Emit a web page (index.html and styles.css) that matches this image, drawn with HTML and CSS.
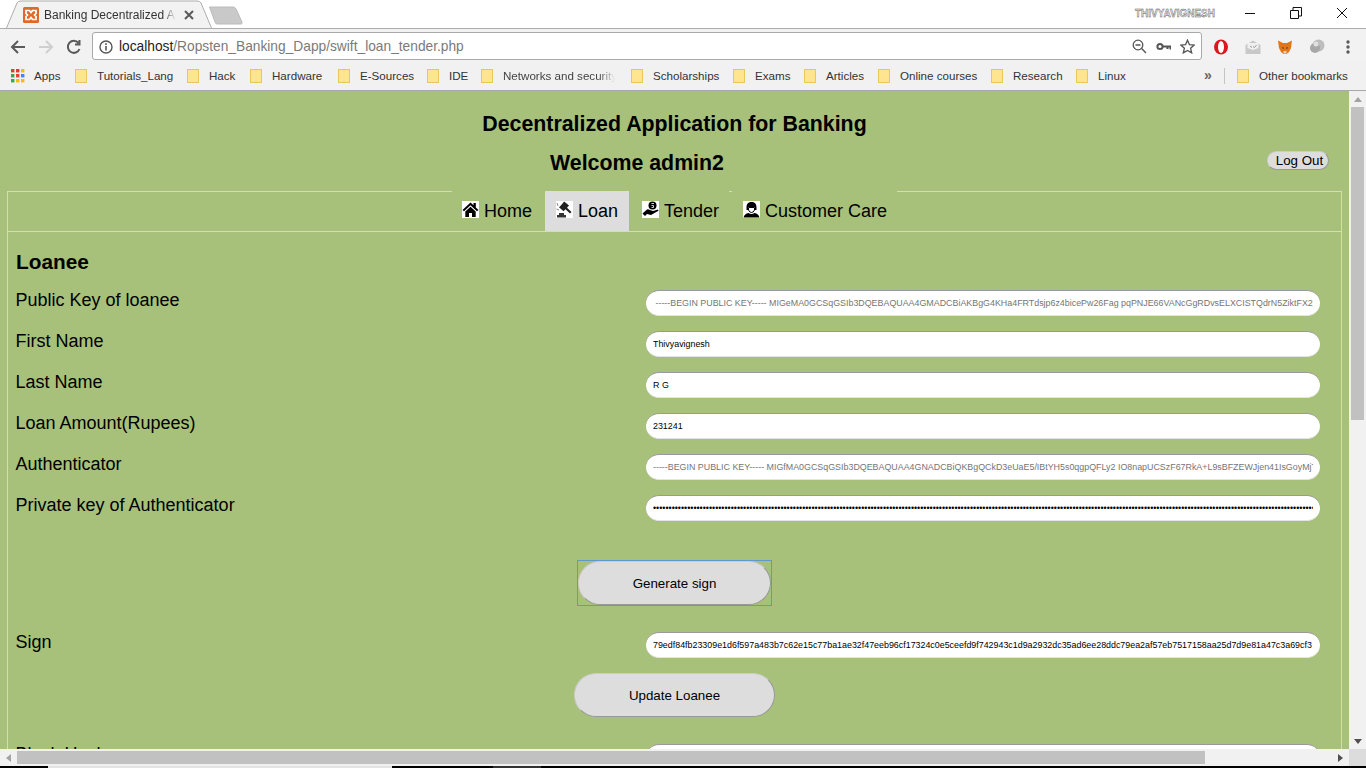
FILE: index.html

```html
<!DOCTYPE html>
<html lang="en">
<head>
    <meta charset="UTF-8">
    <meta name="viewport" content="width=device-width, initial-scale=1.0">
    <title>Banking Decentralized App</title>
    <link rel="stylesheet" href="styles.css">
</head>
<body>

    <!-- browser window: tabs -->
    <div class="tabstrip">
        <svg class="tab-shape" width="206" height="29" viewBox="0 0 206 29">
            <path d="M0.5 28 L11 3 Q12 1 15 1 L191 1 Q194 1 195 3 L205.5 28" fill="#f2f2f2" stroke="#adadad"/>
        </svg>
        <div class="tab">
            <svg class="favicon" width="16" height="16" viewBox="0 0 16 16">
                <rect width="16" height="16" rx="1.5" fill="#e2672a"/>
                <path d="M3 3.5 H6.5 L8 5.5 L9.5 3.5 H13 V6.5 L11.5 8 L13 9.5 V12.5 H9.5 L8 10.5 L6.5 12.5 H3 V9.5 L4.5 8 L3 6.5 Z" fill="none" stroke="#fff" stroke-width="1.7"/>
            </svg>
            <span class="tab-title">Banking Decentralized Ap</span>
            <svg class="tab-close" width="10" height="10" viewBox="0 0 10 10">
                <path d="M1 1 L9 9 M9 1 L1 9" stroke="#5a5a5a" stroke-width="2"/>
            </svg>
        </div>
        <svg class="newtab" width="36" height="19" viewBox="0 0 36 19">
            <path d="M1.5 1 H25 Q27 1 28 3 L34 16 Q34.5 18 33 18 H9 Q7.5 18 7 16 Z" fill="#c9c9c9" stroke="#bbb"/>
        </svg>
        <span class="username">THIVYAVIGNESH</span>
        <div class="window-buttons">
            <svg width="12" height="12" viewBox="0 0 12 12"><path d="M1 6.5 H11" stroke="#111"/></svg>
            <svg width="12" height="12" viewBox="0 0 12 12"><path d="M0.5 3.5 H8.5 V11.5 H0.5 Z M3 3 V0.5 H11.5 V9 H9" fill="none" stroke="#111"/></svg>
            <svg width="12" height="12" viewBox="0 0 12 12"><path d="M1 1 L11 11 M11 1 L1 11" stroke="#111"/></svg>
        </div>
    </div>

    <!-- browser window: toolbar -->
    <div class="toolbar">
        <svg class="nav-icon" width="16" height="16" viewBox="0 0 16 16"><path d="M15 8 H2.5 M8 2 L2 8 L8 14" fill="none" stroke="#5a5a5a" stroke-width="2"/></svg>
        <svg class="nav-icon" width="16" height="16" viewBox="0 0 16 16"><path d="M1 8 H13.5 M8 2 L14 8 L8 14" fill="none" stroke="#cfcfcf" stroke-width="2"/></svg>
        <svg class="nav-icon" width="16" height="16" viewBox="0 0 16 16"><path d="M13.5 10 A6 6 0 1 1 12.5 4 M13.5 1 V5.5 H9" fill="none" stroke="#5a5a5a" stroke-width="2"/></svg>
        <div class="omnibox">
            <svg class="omni-info" width="14" height="14" viewBox="0 0 14 14"><circle cx="7" cy="7" r="6" fill="none" stroke="#555" stroke-width="1.4"/><path d="M7 6 V10.5 M7 3.2 V5" stroke="#555" stroke-width="1.6"/></svg>
            <span class="url"><span class="url-host">localhost</span>/Ropsten_Banking_Dapp/swift_loan_tender.php</span>
            <svg class="omni-icon" width="15" height="15" viewBox="0 0 15 15"><circle cx="6" cy="6" r="4.8" fill="none" stroke="#555" stroke-width="1.3"/><path d="M3.5 6 H8.5 M9.6 9.6 L14 14" stroke="#555" stroke-width="1.4"/></svg>
            <svg class="omni-icon" width="15" height="15" viewBox="0 0 15 15"><circle cx="4" cy="7.5" r="2.6" fill="none" stroke="#555" stroke-width="2"/><path d="M6.5 7.5 H14.5 V10.5 M11.5 7.5 V10" fill="none" stroke="#555" stroke-width="2"/></svg>
            <svg class="omni-icon" width="15" height="15" viewBox="0 0 15 15"><path d="M7.5 1.2 L9.4 5.6 L14.2 6 L10.6 9.2 L11.7 13.9 L7.5 11.4 L3.3 13.9 L4.4 9.2 L0.8 6 L5.6 5.6 Z" fill="none" stroke="#555" stroke-width="1.3"/></svg>
        </div>
        <div class="extensions">
            <svg width="16" height="16" viewBox="0 0 16 16"><ellipse cx="8" cy="8" rx="7" ry="7.5" fill="#e0161f"/><ellipse cx="8" cy="8" rx="3" ry="6" fill="#fff"/></svg>
            <svg width="16" height="16" viewBox="0 0 16 16"><path d="M0.5 6 L8 1.5 L15.5 6 V15 H0.5 Z" fill="#c8c8c8"/><path d="M2.5 4 H13.5 V9 L8 11 L2.5 9 Z" fill="#efefef"/><path d="M5 7 L7 8.5 M8 7.5 L9.5 8.5 L11.5 6" stroke="#999" fill="none"/></svg>
            <svg width="16" height="16" viewBox="0 0 16 16"><path d="M1 1.5 L6 4 H10 L15 1.5 L14 9 L12 13 L9.5 15 H6.5 L4 13 L2 9 Z" fill="#e2761b"/><path d="M5 8 L7 9 L6 10 Z M11 8 L9 9 L10 10 Z" fill="#2a2a2a"/><path d="M6.5 12 H9.5 V14.5 H6.5 Z" fill="#e8d5c0"/></svg>
            <svg width="16" height="16" viewBox="0 0 16 16"><circle cx="9.5" cy="6.5" r="6" fill="#bdbdbd"/><circle cx="6" cy="9" r="5" fill="#a8a8a8"/><circle cx="7" cy="5" r="2.5" fill="#e0e0e0"/></svg>
            <svg class="dots" width="4" height="14" viewBox="0 0 4 14"><circle cx="2" cy="2" r="1.7" fill="#5a5a5a"/><circle cx="2" cy="7" r="1.7" fill="#5a5a5a"/><circle cx="2" cy="12" r="1.7" fill="#5a5a5a"/></svg>
        </div>
    </div>

    <!-- browser window: bookmarks -->
    <div class="bookmarks">
        <span class="bookmark apps-link">
            <svg width="14" height="14" viewBox="0 0 14 14">
                <rect x="0" y="0" width="3.4" height="3.4" fill="#e53935"/><rect x="5" y="0" width="3.4" height="3.4" fill="#e53935"/><rect x="10" y="0" width="3.4" height="3.4" fill="#fbbc05"/>
                <rect x="0" y="5" width="3.4" height="3.4" fill="#34a853"/><rect x="5" y="5" width="3.4" height="3.4" fill="#ea4335"/><rect x="10" y="5" width="3.4" height="3.4" fill="#4285f4"/>
                <rect x="0" y="10" width="3.4" height="3.4" fill="#34a853"/><rect x="5" y="10" width="3.4" height="3.4" fill="#fbbc05"/><rect x="10" y="10" width="3.4" height="3.4" fill="#fbbc05"/>
            </svg>
            Apps
        </span>
        <span class="bookmark w-tutorials"><i class="folder"></i>Tutorials_Lang</span>
        <span class="bookmark w-hack"><i class="folder"></i>Hack</span>
        <span class="bookmark w-hardware"><i class="folder"></i>Hardware</span>
        <span class="bookmark w-esources"><i class="folder"></i>E-Sources</span>
        <span class="bookmark w-ide"><i class="folder"></i>IDE</span>
        <span class="bookmark w-networks"><i class="folder"></i><span class="fade">Networks and security</span></span>
        <span class="bookmark w-scholar"><i class="folder"></i>Scholarships</span>
        <span class="bookmark w-exams"><i class="folder"></i>Exams</span>
        <span class="bookmark w-articles"><i class="folder"></i>Articles</span>
        <span class="bookmark w-online"><i class="folder"></i>Online courses</span>
        <span class="bookmark w-research"><i class="folder"></i>Research</span>
        <span class="bookmark w-linux"><i class="folder"></i>Linux</span>
        <span class="more">&raquo;</span>
        <span class="bm-sep"></span>
        <span class="bookmark other"><i class="folder"></i>Other bookmarks</span>
    </div>

    <!-- the page itself -->
    <div class="viewport">
        <div class="page">
            <h2 class="title">Decentralized Application for Banking</h2>
            <div class="welcome-row">
                <h2 class="welcome">Welcome admin2</h2>
                <button class="logout" type="button">Log Out</button>
            </div>

            <div class="panel">
                <ul class="menu">
                    <li class="menu-item item-home">
                        <svg class="menu-icon" width="17" height="17" viewBox="0 0 17 17">
                            <rect width="17" height="17" fill="#fff"/>
                            <path d="M8.5 1.5 L0.5 9 L2 10.2 L8.5 4.3 L15 10.2 L16.5 9 L13.8 6.5 V2 H11.5 V4.3 Z M3.3 10.5 L8.5 5.8 L13.7 10.5 V16 H10 V12 H7 V16 H3.3 Z" fill="#000"/>
                        </svg>
                        Home
                    </li>
                    <li class="menu-item active">
                        <svg class="menu-icon" width="17" height="17" viewBox="0 0 17 17">
                            <rect width="17" height="17" fill="#fff"/>
                            <path d="M8.2 0.5 L13 4.5 L11 6.8 L15.5 11 L14 12.5 L9.5 8.2 L7.5 10.3 L3 6.3 L4.6 4.7 L6.5 2.5 Z" fill="#222"/>
                            <path d="M1 2 L2 5 M0.5 8 L3 9" stroke="#888"/>
                            <path d="M1 14 H10 V16.5 H1 Z M3 12 H8 V14 H3 Z" fill="#333"/>
                        </svg>
                        Loan
                    </li>
                    <li class="menu-item item-tender">
                        <svg class="menu-icon" width="17" height="17" viewBox="0 0 17 17">
                            <rect width="17" height="17" fill="#fff"/>
                            <circle cx="10.5" cy="4.5" r="4" fill="#000"/>
                            <path d="M9.5 2.5 H12 M9.5 4.5 H11.5 V6.5 H9.5" stroke="#fff" fill="none" stroke-width="0.8"/>
                            <path d="M0.5 12.5 L5 8.5 Q6 8 8 9 L11 10 L16 8.5 L16.5 9.8 L9 14 L5 13 L3 15 Z" fill="#000"/>
                        </svg>
                        Tender
                    </li>
                    <li class="menu-item item-care">
                        <svg class="menu-icon" width="17" height="17" viewBox="0 0 17 17">
                            <rect width="17" height="17" fill="#fff"/>
                            <path d="M8.5 1 C4.5 1 3.5 3.5 3.5 6.5 V9 H5 V6 H12 V9 H13.5 V6.5 C13.5 3.5 12.5 1 8.5 1 Z" fill="#000"/>
                            <path d="M5.5 6.5 H11.5 V9 Q10.5 11.5 8.5 11.5 Q6.5 11.5 5.5 9 Z" fill="none" stroke="#000"/>
                            <path d="M0.5 16.5 Q1.5 12.5 5.5 12 Q8.5 14 11.5 12 Q15.5 12.5 16.5 16.5 Z" fill="#000"/>
                        </svg>
                        Customer Care
                    </li>
                </ul>

                <div class="pane">
                    <h3 class="pane-title">Loanee</h3>

                    <div class="row">
                        <label class="row-label">Public Key of loanee</label>
                        <input class="field key" type="text" value=" -----BEGIN PUBLIC KEY----- MIGeMA0GCSqGSIb3DQEBAQUAA4GMADCBiAKBgG4KHa4FRTdsjp6z4bicePw26Fag pqPNJE66VANcGgRDvsELXCISTQdrN5ZiktFX2rW7uLm0aBc4dYpQ">
                    </div>
                    <div class="row">
                        <label class="row-label">First Name</label>
                        <input class="field" type="text" value="Thivyavignesh">
                    </div>
                    <div class="row">
                        <label class="row-label">Last Name</label>
                        <input class="field" type="text" value="R G">
                    </div>
                    <div class="row">
                        <label class="row-label">Loan Amount(Rupees)</label>
                        <input class="field" type="text" value="231241">
                    </div>
                    <div class="row">
                        <label class="row-label">Authenticator</label>
                        <input class="field key" type="text" value="-----BEGIN PUBLIC KEY----- MIGfMA0GCSqGSIb3DQEBAQUAA4GNADCBiQKBgQCkD3eUaE5/IBtYH5s0qgpQFLy2 IO8napUCSzF67RkA+L9sBFZEWJjen41IsGoyMjT2wVb8Rn0xPq">
                    </div>
                    <div class="row">
                        <label class="row-label">Private key of Authenticator</label>
                        <input class="field" type="password" value="aaaaaaaaaaaaaaaaaaaaaaaaaaaaaaaaaaaaaaaaaaaaaaaaaaaaaaaaaaaaaaaaaaaaaaaaaaaaaaaaaaaaaaaaaaaaaaaaaaaaaaaaaaaaaaaaaaaaaaaaaaaaaaaaaaaaaaaaaaaaaaaaaaaaaaaaaaaaaaaaaaaaaaaaaaaaaaaaaaaaaaaaaaaaaaaaaaaaaaaaaaaaaaaaaaaaaaaaaaaaaaaaaaaaaaaaaaaaaaaaaaaaaaaaaaaaaaaaaaaaaaaaaaaaaaaaaaaaaaaaaaaaaaa">
                    </div>

                    <div class="actions first">
                        <span class="focus-ring"><button class="pill" type="button">Generate sign</button></span>
                    </div>

                    <div class="row">
                        <label class="row-label">Sign</label>
                        <input class="field" type="text" value="79edf84fb23309e1d6f597a483b7c62e15c77ba1ae32f47eeb96cf17324c0e5ceefd9f742943c1d9a2932dc35ad6ee28ddc79ea2af57eb7517158aa25d7d9e81a47c3a69cf3">
                    </div>

                    <div class="actions">
                        <button class="pill" type="button">Update Loanee</button>
                    </div>

                    <div class="row">
                        <label class="row-label">Block Hash</label>
                        <input class="field" type="text" value="">
                    </div>
                </div>
            </div>
        </div>

        <!-- vertical scrollbar -->
        <div class="vscroll">
            <span class="arrow-up"></span>
            <span class="vthumb"></span>
            <span class="arrow-down"></span>
        </div>
    </div>

    <!-- horizontal scrollbar -->
    <div class="hscroll">
        <span class="arrow-left"></span>
        <span class="hthumb"></span>
        <span class="arrow-right"></span>
        <span class="corner"></span>
    </div>

    <!-- taskbar edge -->
    <div class="taskbar">
        <span class="task-a"></span>
        <span class="task-b"></span>
    </div>

</body>
</html>
```

FILE: styles.css

```css
html, body {
    margin: 0;
    padding: 0;
    height: 768px;
    overflow: hidden;
}

body {
    font-family: 'Liberation Sans', Arial, sans-serif;
    background-color: #fff;
    color: #000;
    display: flex;
    flex-direction: column;
}

/* tab strip */
.tabstrip {
    height: 28px;
    background-color: #fff;
    border-bottom: 1px solid #adadad;
    display: flex;
    align-items: flex-start;
    position: relative;
}

.tab-shape {
    position: absolute;
    left: 6px;
    top: 0;
}

.tab {
    position: relative;
    margin-left: 23px;
    width: 172px;
    height: 28px;
    padding-top: 2px;
    box-sizing: border-box;
    display: flex;
    align-items: center;
    font-size: 12px;
    color: #333;
}

.favicon {
    flex: none;
}

.tab-title {
    margin-left: 5px;
    width: 132px;
    white-space: nowrap;
    overflow: hidden;
    -webkit-mask-image: linear-gradient(to right, #000 90%, transparent);
}

.tab-close {
    margin-left: 8px;
    flex: none;
}

.newtab {
    margin: 6px 0 0 13px;
    flex: none;
}

.username {
    margin: 8px 0 0 auto;
    font-size: 10px;
    font-weight: bold;
    color: #e8e8e8;
    -webkit-text-stroke: 0.4px #555;
}

.window-buttons {
    margin: 7px 0 0 29px;
    padding-right: 18px;
    display: flex;
    gap: 34px;
}

/* toolbar */
.toolbar {
    height: 33px;
    background-color: #f2f2f2;
    display: flex;
    align-items: center;
    padding: 0 15px 0 10px;
}

.nav-icon {
    margin: 2px 12px 0 0;
    flex: none;
}

.omnibox {
    width: 1096px;
    height: 26px;
    margin-left: -2px;
    background-color: #fff;
    border: 1px solid #a9a9a9;
    border-radius: 3px;
    display: flex;
    align-items: center;
    padding: 0 6px 0 6px;
    box-sizing: content-box;
    flex: none;
}

.omni-info {
    margin-top: 2px;
}

.url {
    margin: 2px 0 0 6px;
    font-size: 13.76px;
    color: #7a7a7a;
    flex: 1;
}

.url-host {
    color: #222;
}

.omni-icon {
    margin: 2px 0 0 9px;
}

.extensions {
    margin: 2px 0 0 11px;
    display: flex;
    align-items: center;
    gap: 16px;
}

.dots {
    margin-left: 5px;
}

/* bookmarks */
.bookmarks {
    height: 26px;
    padding: 0 0 2px 11px;
    background-color: #f1f1f1;
    border-bottom: 1px solid #a9a9a9;
    display: flex;
    align-items: center;
    font-size: 11.6px;
    color: #333;
}

.bookmark {
    display: flex;
    align-items: center;
    white-space: nowrap;
    flex: none;
}

.apps-link svg {
    margin: 2px 9px 0 0;
}

.apps-link {
    width: 64px;
}

.folder {
    display: block;
    width: 10px;
    height: 12px;
    background-color: #ffe590;
    border: 1px solid #e8c85a;
    margin: 2px 10px 0 0;
    flex: none;
}

.w-tutorials { width: 112px; }
.w-hack { width: 63px; }
.w-hardware { width: 88px; }
.w-esources { width: 89px; }
.w-ide { width: 54px; }

.w-networks {
    width: 150px;
}

.fade {
    width: 112px;
    overflow: hidden;
    color: #444;
    -webkit-mask-image: linear-gradient(to right, #000 85%, transparent);
}

.w-scholar { width: 102px; }
.w-exams { width: 71px; }
.w-articles { width: 74px; }
.w-online { width: 113px; }
.w-research { width: 85px; }
.w-linux { width: 128px; }

.more {
    font-size: 14px;
    font-weight: bold;
    color: #666;
    width: 20px;
}

.bm-sep {
    width: 1px;
    height: 16px;
    margin: 2px 12px 0 0;
    background-color: #c4c4c4;
}

/* page */
.viewport {
    height: 658px;
    display: flex;
    background-color: #a7c17b;
}

.page {
    width: 1349px;
    height: 658px;
    overflow: hidden;
    flex: none;
}

.title {
    margin: 21px 0 0 0;
    font-size: 21.33px;
    line-height: 24px;
    text-align: center;
}

.welcome-row {
    display: flex;
    align-items: flex-start;
    margin-top: 15px;
    padding-right: 20px;
}

.welcome {
    flex: 1;
    margin: 0;
    font-size: 21.33px;
    line-height: 24px;
    text-align: center;
    padding-left: 7px;
}

.logout {
    width: 62px;
    height: 19px;
    margin-top: 0;
    padding: 0 0 0 3px;
    font-family: inherit;
    font-size: 13.33px;
    line-height: 16px;
    color: #000;
    background-color: #ddd;
    border: 1px solid #999;
    border-top-color: #ccc;
    border-left-color: #ccc;
    border-radius: 10px;
}

.panel {
    margin: 16px 7px 0 7px;
    border: 1px solid #d3dcbf;
    border-bottom: none;
    height: 600px;
}

.menu {
    list-style: none;
    margin: -1px 0 0 0;
    padding: 0;
    height: 40px;
    display: flex;
    justify-content: center;
    border-bottom: 1px solid #d3dcbf;
}

.menu-item {
    height: 40px;
    padding: 0 11px;
    display: flex;
    align-items: center;
    gap: 5px;
    font-size: 18px;
    background-color: #a7c17b;
}

.item-home {
    padding: 0 13px 0 10px;
}

.item-tender {
    padding: 0 10px 0 13px;
}

.item-care {
    margin-left: 3px;
    padding: 0 10px 0 11px;
}

.menu-item.active {
    background-color: #ddd;
}

.menu-icon {
    margin-top: -4px;
    flex: none;
}

.pane {
    padding: 0 21px 0 8px;
}

.pane-title {
    margin: 18px 0 16px 0;
    font-size: 20.8px;
    line-height: 24px;
}

.row {
    display: flex;
    justify-content: space-between;
    align-items: flex-start;
    margin-bottom: 15px;
}

.row-label {
    font-size: 18px;
    line-height: 20px;
    margin-left: -0.5px;
}

.field {
    width: 674px;
    height: 26px;
    box-sizing: border-box;
    padding: 0 7px;
    font-family: 'Liberation Sans', Arial, sans-serif;
    font-size: 8.9px;
    color: #000;
    background-color: #fff;
    border: none;
    border-top: 1px solid #999;
    border-bottom: 1px solid #e4e4e4;
    border-radius: 13px;
    outline: none;
    flex: none;
}

.field.key {
    color: #757575;
}

.actions {
    display: flex;
    justify-content: center;
    margin-bottom: 27px;
    padding-left: 13px;
}

.actions.first {
    margin-top: 40px;
}

.pill {
    display: block;
    height: 44px;
    padding: 0 54px;
    font-family: inherit;
    font-size: 13.33px;
    color: #000;
    background-color: #ddd;
    border: 1px solid #999;
    border-top-color: #ccc;
    border-left-color: #ccc;
    border-radius: 22px;
}

.focus-ring {
    display: block;
    outline: 1px solid #5f97cf;
}

/* scrollbars */
.vscroll {
    width: 17px;
    height: 658px;
    background-color: #f1f1f1;
    display: flex;
    flex-direction: column;
    align-items: center;
    flex: none;
}

.vthumb {
    display: block;
    width: 13px;
    height: 313px;
    background-color: #c1c1c1;
}

.arrow-up,
.arrow-down {
    display: block;
    width: 0;
    height: 0;
    border-left: 4px solid transparent;
    border-right: 4px solid transparent;
}

.arrow-up {
    margin: 6px 0 5px 0;
    border-bottom: 5px solid #a3a3a3;
}

.arrow-down {
    margin: auto 0 5px 0;
    border-top: 5px solid #505050;
}

.hscroll {
    height: 17px;
    background-color: #f1f1f1;
    display: flex;
    align-items: center;
}

.hthumb {
    display: block;
    width: 1188px;
    height: 13px;
    background-color: #c1c1c1;
}

.arrow-left,
.arrow-right {
    display: block;
    width: 0;
    height: 0;
    border-top: 4px solid transparent;
    border-bottom: 4px solid transparent;
}

.arrow-left {
    margin: 0 6px 0 6px;
    border-right: 5px solid #a3a3a3;
}

.arrow-right {
    margin: 0 6px 0 auto;
    border-left: 5px solid #505050;
}

.corner {
    width: 17px;
    height: 17px;
    background-color: #dcdcdc;
}

.taskbar {
    height: 2px;
    background-color: #000;
    display: flex;
}

.task-a {
    width: 344px;
    margin-left: 48px;
    background-color: #e4e4e4;
}

.task-b {
    width: 48px;
    margin-left: 101px;
    background-color: #333;
}
```
